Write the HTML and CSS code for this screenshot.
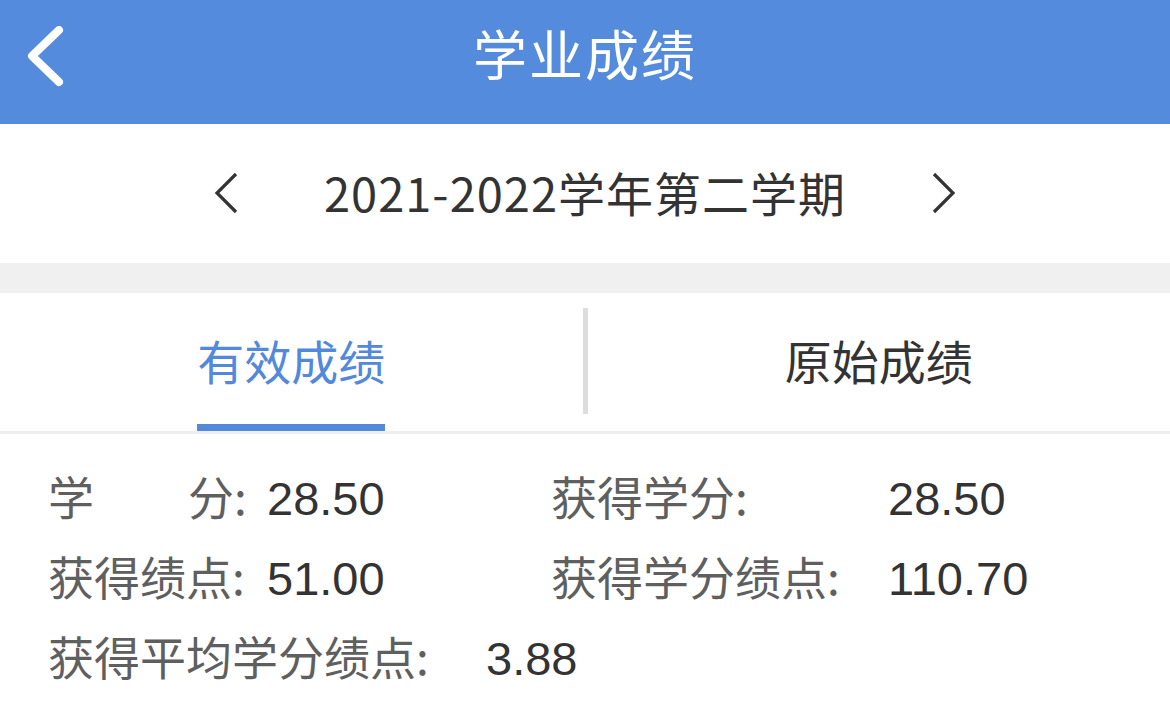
FILE: index.html
```html
<!DOCTYPE html>
<html lang="zh-CN">
<head>
<meta charset="utf-8">
<title>学业成绩</title>
<link rel="stylesheet" href="styles.css">
</head>
<body>
<div class="page">
  <header class="topbar">
    <div class="back">
      <svg width="40" height="64" viewBox="0 0 40 64"><path d="M33 4 L6 30 L33 56" fill="none" stroke="#fff" stroke-width="8" stroke-linecap="round" stroke-linejoin="round"/></svg>
    </div>
    <h1 class="title">学业成绩</h1>
    <div class="spacer"></div>
  </header>

  <section class="term">
    <svg class="chev" width="28" height="44" viewBox="0 0 28 44"><path d="M24 2 L5 21 L24 40" fill="none" stroke="#333" stroke-width="3.2"/></svg>
    <span class="term-text">2021-2022学年第二学期</span>
    <svg class="chev" width="28" height="44" viewBox="0 0 28 44"><path d="M4 2 L23 21 L4 40" fill="none" stroke="#333" stroke-width="3.2"/></svg>
  </section>

  <div class="gap"></div>

  <nav class="tabs">
    <div class="tab active"><span class="tab-label">有效成绩</span></div>
    <div class="divider"></div>
    <div class="tab"><span class="tab-label">原始成绩</span></div>
  </nav>

  <section class="stats">
    <div class="row">
      <div class="cell c1"><span class="lbl w1"><span class="just"><span>学</span><span>分</span></span>:</span><span class="val">28.50</span></div>
      <div class="cell"><span class="lbl w2">获得学分:</span><span class="val">28.50</span></div>
    </div>
    <div class="row">
      <div class="cell c1"><span class="lbl w1">获得绩点:</span><span class="val">51.00</span></div>
      <div class="cell"><span class="lbl w2">获得学分绩点:</span><span class="val">110.70</span></div>
    </div>
    <div class="row">
      <div class="cell"><span class="lbl w3">获得平均学分绩点:</span><span class="val">3.88</span></div>
    </div>
  </section>
</div>
</body>
</html>
```

FILE: styles.css
```css
* { box-sizing: border-box; margin: 0; padding: 0; }
html, body { background: #fff; }
body {
  font-family: "Noto Sans CJK SC", "Noto Sans", sans-serif;
  color: #333;
}
.page { width: 1170px; height: 721px; overflow: hidden; }

.topbar {
  height: 124px;
  background: #558bdd;
  display: grid;
  grid-template-columns: 1fr auto 1fr;
  align-items: center;
}
.back { padding-left: 26px; display: flex; align-items: center; padding-bottom: 8px; }
.back svg { display: block; }
.title {
  color: #fff;
  font-weight: 400;
  font-size: 54px;
  line-height: 1;
  letter-spacing: 2px;
  padding-bottom: 18px;
}

.term {
  height: 139px;
  display: flex;
  align-items: center;
  justify-content: center;
  gap: 84px;
}
.chev { display: block; }
.term-text {
  font-size: 47px;
  line-height: 1;
  color: #333;
  letter-spacing: 1px;
  padding-bottom: 4px;
}

.gap { height: 30px; background: #f0f0f0; }

.tabs {
  height: 141px;
  display: flex;
  align-items: stretch;
  border-bottom: 3px solid #eeeeee;
}
.tab {
  flex: 1;
  display: flex;
  justify-content: center;
  align-items: stretch;
}
.tab-label {
  font-size: 47px;
  line-height: 1;
  color: #333;
  display: flex;
  align-items: center;
  padding-top: 2px;
  border-bottom: 7px solid transparent;
}
.tab.active .tab-label { color: #5289da; border-bottom-color: #5289da; }
.divider {
  width: 5px;
  background: #dddddd;
  margin: 15px 0 17px;
}

.stats { padding: 21px 0 0 48px; }
.row { display: flex; height: 80px; align-items: center; }
.cell { display: flex; align-items: baseline; font-size: 46px; }
.c1 { width: 503px; }
.lbl { color: #5f5f5f; white-space: nowrap; display: inline-flex; }
.w1 { width: 219px; }
.w2 { width: 337px; }
.w3 { width: 438px; }
.just { display: flex; justify-content: space-between; width: 186px; }
.val { font-family: "Liberation Sans", "Noto Sans CJK SC", sans-serif; color: #333; font-size: 47px; }
```
